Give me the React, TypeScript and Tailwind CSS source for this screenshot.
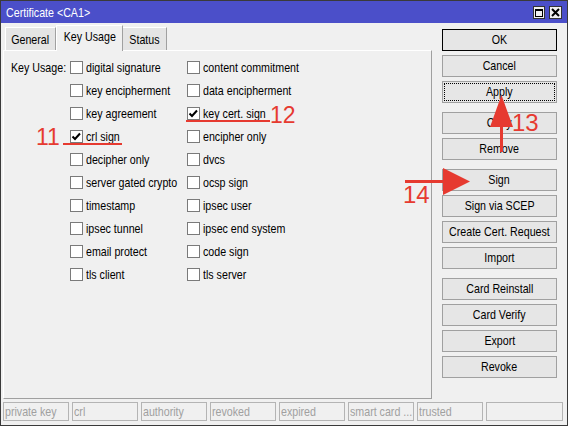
import React from "react";

const col1: [string, boolean][] = [
  ["digital signature", false],
  ["key encipherment", false],
  ["key agreement", false],
  ["crl sign", true],
  ["decipher only", false],
  ["server gated crypto", false],
  ["timestamp", false],
  ["ipsec tunnel", false],
  ["email protect", false],
  ["tls client", false],
];
const col2: [string, boolean][] = [
  ["content commitment", false],
  ["data encipherment", false],
  ["key cert. sign", true],
  ["encipher only", false],
  ["dvcs", false],
  ["ocsp sign", false],
  ["ipsec user", false],
  ["ipsec end system", false],
  ["code sign", false],
  ["tls server", false],
];

function NL({ children }: { children: React.ReactNode }) {
  return <span className="inline-block whitespace-nowrap scale-x-[0.82] origin-left">{children}</span>;
}
function NC({ children }: { children: React.ReactNode }) {
  return <span className="inline-block whitespace-nowrap scale-x-[0.82] origin-center">{children}</span>;
}

function Check({ label, checked }: { label: string; checked: boolean }) {
  return (
    <div className="h-[23px] flex items-center">
      <div className="w-[13px] h-[13px] border border-[#7a7a7a] bg-white flex items-center justify-center shrink-0">
        {checked && (
          <svg width="11" height="11" viewBox="0 0 11 11">
            <path d="M1.5 5.5 L4 8 L9 2.5" fill="none" stroke="#000" strokeWidth="2" />
          </svg>
        )}
      </div>
      <span className="ml-[3px] w-[90px]">
        <NL>{label}</NL>
      </span>
    </div>
  );
}

function Btn({ label, variant }: { label: string; variant?: "ok" | "focus" }) {
  const base =
    "w-[115px] h-[22px] flex items-center justify-center bg-[#e6e6e6] border whitespace-nowrap";
  if (variant === "ok")
    return (
      <div className={base + " border-black"}>
        <NC>{label}</NC>
      </div>
    );
  if (variant === "focus")
    return (
      <div className={base + " border-[#a0a0a0] outline-1 outline-dotted outline-black -outline-offset-[3px]"}>
        <NC>{label}</NC>
      </div>
    );
  return (
    <div className={base + " border-[#a0a0a0]"}>
      <NC>{label}</NC>
    </div>
  );
}

const statusCells = ["private key", "crl", "authority", "revoked", "expired", "smart card ...", "trusted"];

export default function App() {
  return (
    <div className="relative w-[568px] h-[426px] font-['Liberation_Sans',Arial,sans-serif] text-[13px] text-black">
      <div className="w-full h-full bg-[#f0f0f0] border border-[#3a3a3a] flex flex-col overflow-hidden">
        {/* title bar */}
        <div className="h-[22px] bg-[#4b4fc9] flex items-center justify-between pl-[5px] pr-[5px] shrink-0">
          <span className="text-white pt-[2px]">
            <NL>Certificate &lt;CA1&gt;</NL>
          </span>
          <div className="flex gap-[4px] pt-[1px]">
            <div className="w-[12px] h-[13px] bg-[#f0f0f0] border border-[#333] flex items-center justify-center">
              <div className="w-[8px] h-[8px] border border-black border-t-2"></div>
            </div>
            <div className="w-[13px] h-[13px] bg-[#f0f0f0] border border-[#333] flex items-center justify-center">
              <svg width="9" height="9" viewBox="0 0 9 9">
                <path d="M1 1 L8 8 M8 1 L1 8" stroke="#000" strokeWidth="2" />
              </svg>
            </div>
          </div>
        </div>
        {/* body */}
        <div className="flex h-[376px] shrink-0">
          <div className="pl-[2px] pt-[2px] flex flex-col">
            <div className="h-[25px] flex items-end pl-[2px]">
              <div className="w-[51px] h-[23px] bg-[#e4e4e4] border-t border-l border-white border-r border-r-[#a0a0a0] flex items-center justify-center pt-[1px]">
                <NC>General</NC>
              </div>
              <div className="w-[67px] h-[26px] -mb-px relative z-10 bg-[#f0f0f0] border-t border-l border-white border-r border-r-[#a0a0a0] flex items-center justify-center pb-[4px]">
                <NC>Key Usage</NC>
              </div>
              <div className="w-[44px] h-[23px] bg-[#e4e4e4] border-t border-white border-r border-r-[#a0a0a0] flex items-center justify-center pt-[1px]">
                <NC>Status</NC>
              </div>
            </div>
            <div className="w-[429px] h-[349px] border-t border-l border-white border-r border-b border-r-[#a0a0a0] border-b-[#a0a0a0] pt-[5px] pl-[7px] flex">
              <div className="w-[59px] h-[23px] flex items-center">
                <NL>Key Usage:</NL>
              </div>
              <div className="w-[117px] flex flex-col">
                {col1.map(([l, c]) => (
                  <Check key={l} label={l} checked={c} />
                ))}
              </div>
              <div className="flex flex-col">
                {col2.map(([l, c]) => (
                  <Check key={l} label={l} checked={c} />
                ))}
              </div>
            </div>
          </div>
          <div className="pl-[10px] pt-[6px] flex flex-col gap-[9px]">
            <div className="flex flex-col gap-[4px]">
              <Btn label="OK" variant="ok" />
              <Btn label="Cancel" />
              <Btn label="Apply" variant="focus" />
            </div>
            <div className="flex flex-col gap-[4px]">
              <Btn label="Copy" />
              <Btn label="Remove" />
            </div>
            <div className="flex flex-col gap-[4px]">
              <Btn label="Sign" />
              <Btn label="Sign via SCEP" />
              <Btn label="Create Cert. Request" />
              <Btn label="Import" />
            </div>
            <div className="flex flex-col gap-[4px]">
              <Btn label="Card Reinstall" />
              <Btn label="Card Verify" />
              <Btn label="Export" />
              <Btn label="Revoke" />
            </div>
          </div>
        </div>
        {/* status bar */}
        <div className="mt-[3px] pl-[2px] flex gap-[3px] shrink-0">
          {statusCells.map((s) => (
            <div key={s} className="w-[66px] h-[19px] border border-[#b4b4b4] text-[#a0a0a0] pl-[1px] flex items-center overflow-hidden">
              <NL>{s}</NL>
            </div>
          ))}
          <div className="w-[77px] h-[19px] border border-[#b4b4b4]"></div>
        </div>
      </div>

      {/* annotations */}
      <svg className="absolute inset-0 pointer-events-none" width="568" height="426" viewBox="0 0 568 426">
        <line x1="63" y1="144" x2="122" y2="144" stroke="#e63a30" strokeWidth="2" />
        <line x1="186" y1="121" x2="270" y2="121" stroke="#e63a30" strokeWidth="2" />
        <rect x="500" y="125" width="3" height="27" fill="#e63a30" />
        <polygon points="501.5,95 490,127 513,127" fill="#e63a30" />
        <rect x="405" y="180" width="40" height="3" fill="#e63a30" />
        <polygon points="470,181.5 443,168 443,195" fill="#e63a30" />
      </svg>
      <div className="absolute left-[36px] top-[126px] text-[23px] leading-[23px] text-[#e63a30]">11</div>
      <div className="absolute left-[270px] top-[104px] text-[23px] leading-[23px] text-[#e63a30]">12</div>
      <div className="absolute left-[512px] top-[111px] text-[24px] leading-[24px] text-[#e63a30]">13</div>
      <div className="absolute left-[403px] top-[183px] text-[24px] leading-[24px] text-[#e63a30]">14</div>
    </div>
  );
}
